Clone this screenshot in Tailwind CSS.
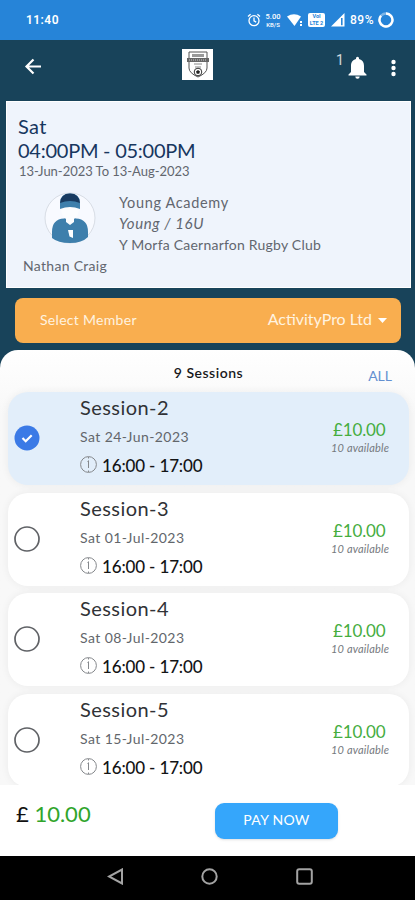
<!DOCTYPE html>
<html lang="en">
<head>
<meta charset="utf-8">
<meta name="viewport" content="width=device-width, initial-scale=1">
<title>Sessions</title>
<script src="https://cdn.jsdelivr.net/npm/@tailwindcss/browser@4"></script>
</head>
<body class="w-[415px] h-[900px] overflow-hidden flex flex-col bg-[#18435a] font-[Lato,'Liberation_Sans',sans-serif]">
<div class="h-10 shrink-0 bg-[#2684d8] text-white flex items-center justify-between pl-[26px] pr-[21px] font-[Roboto,sans-serif] text-[12px] font-semibold">
  <span class="tracking-[0.45px]">11:40</span>
  <div class="flex items-center">
    <svg class="w-[14px] h-[14px]" viewBox="0 0 14 14" fill="none" stroke="#fff" stroke-width="1.3"><circle cx="7" cy="7.7" r="5"/><path d="M7 4.5v3.4l2.2 1.2M1 3.4l2.6-2.2M13 3.4l-2.6-2.2"/></svg>
    <div class="ml-[4px] w-[16px] flex flex-col items-center text-[7.500px] leading-[8px] font-medium"><span>5.00</span><span class="text-[6px] leading-[7px]">KB/S</span></div>
    <svg class="ml-[6px] w-[16px] h-[14px]" viewBox="0 0 16 14" fill="#fff"><path d="M0 3.5Q7-1 14 3.5L7.500 13z"/><path d="M13 8h2v2h-2zM13 11h2v2h-2z"/></svg>
    <div class="ml-[5px] w-[17px] h-[14px] rounded-[2px] bg-white text-[#2684d8] text-[5.500px] leading-[7px] font-bold flex flex-col items-center justify-center"><span>VoI</span><span>LTE 2</span></div>
    <svg class="ml-[6px] w-[14px] h-[14px]" viewBox="0 0 14 14"><path fill="#fff" d="M0 13.5L13.5 0v13.5z"/><path fill="#2684d8" d="M10 5h1.6v7.3H10z"/></svg>
    <span class="ml-[5px] tracking-[0.5px] font-medium">89%</span>
    <svg class="ml-[4px] w-[16px] h-[16px]" viewBox="0 0 16 16" fill="none" stroke="#fff" stroke-width="2.400"><circle cx="8" cy="8" r="6.5" stroke-opacity=".4"/><path d="M8 1.5A6.5 6.5 0 1 1 3 3.8"/></svg>
  </div>
</div>
<header class="h-[61px] shrink-0 flex items-start pl-[24px] pr-[15px] pt-[9px] text-white">
  <svg class="mt-[9px] w-[18px] h-[18px]" viewBox="0 0 18 18" fill="none" stroke="#fff" stroke-width="2.200"><path d="M17 8.500H2M9.500 1.500l-7 7 7 7"/></svg>
  <svg class="ml-[140px] w-[31px] h-[31px]" viewBox="0 0 31 31"><path fill="#fff" d="M0 0h31v31H0z"/><path d="M7 3h18v16q0 5-9 9-9-4-9-9z" fill="#fff" stroke="#555" stroke-width="1"/><path d="M10 5h12v3H10z" fill="#999"/><path d="M5 9h22v4H5z" fill="#666"/><path d="M7 11h18" stroke="#ccc" stroke-dasharray="1 1"/><path d="M12 15h8M13 18h6" stroke="#888"/><circle cx="16" cy="23" r="3.800" fill="#fff" stroke="#333"/><path d="M16 21l2 1.500-.8 2.300h-2.400L14 22.500z" fill="#222"/></svg>
  <span class="ml-[123px] mt-[3px] text-[14px] leading-[16px] w-[8px] text-white/80 font-[Roboto,sans-serif]">1</span>
  <svg class="ml-[4px] mt-[7px] w-[19px] h-[23px]" viewBox="0 0 19 23" fill="#fff"><path d="M8 2.300a1.500 1.500 0 0 1 3 0v.8c3.500.8 5 3.600 5 7V16l2.500 2.500v1H.5v-1L3 16v-5.900c0-3.400 1.500-6.200 5-7zM7.300 20.500h4.400a2.200 2.200 0 0 1-4.400 0z"/></svg>
  <svg class="ml-[23px] mt-[10px] w-[6px] h-[18px]" viewBox="0 0 6 18" fill="#fff"><circle cx="3.500" cy="3" r="2.200"/><circle cx="3.500" cy="9" r="2.200"/><circle cx="3.500" cy="15" r="2.200"/></svg>
</header>
<section class="h-[187px] shrink-0 ml-[6px] mr-[4px] bg-[#eff4fc] border border-white pl-[11px] text-[#62666f]">
  <div class="pt-[12px] text-[#17375f] text-[20px] leading-[24px]"><div class="tracking-[0.4px]">Sat</div><div class="tracking-[-0.25px]">04:00PM - 05:00PM</div></div>
  <div class="pl-[1px] mt-px text-[13px] leading-[17px] tracking-[-0.03px]">13-Jun-2023 To 13-Aug-2023</div>
  <div class="flex">
    <div class="w-[101px] pl-[5px]">
      <svg class="ml-[21px] mt-[12px] w-[52px] h-[52px]" viewBox="0 0 52 52"><circle cx="26" cy="26" r="25" fill="#f8faff" stroke="#d8dde5"/><path d="M8 46V40Q8 27 20 26.500L22 26l4 5 4-5 2 .5Q44 27 44 40v5q-6 6-18 6T8 46z" fill="#3e7fac"/><path d="M17 15h18q0 9-5 12v3l-4 3-4-3v-3q-5-3-5-12z" fill="#fcfdff"/><path d="M16 17V11Q16 1.500 26 1.500t10 9.500v6q-10-4-20 0z" fill="#3e7fac"/><path d="M16 11Q17 1.500 26 1.500t10 9.500q-10-4-20 0z" fill="#183a60"/><path d="M24 38h5v8l-3.500-1.500z" fill="#fff"/></svg>
      <div class="mt-[13px] text-[14px] leading-[18px] tracking-[0.3px] whitespace-nowrap">Nathan Craig</div>
    </div>
    <div class="pt-[12px] text-[14px] leading-[21px] whitespace-nowrap">
      <div class="text-[14.500px] tracking-[0.65px]">Young Academy</div>
      <div class="italic text-[15px] tracking-[0.6px]">Young / 16U</div>
      <div class="tracking-[0.22px]">Y Morfa Caernarfon Rugby Club</div>
    </div>
  </div>
</section>
<div class="mt-[10px] ml-[15px] mr-[14px] h-[45px] shrink-0 rounded-[8px] bg-[#f9ae4f] text-[#fff3e0] flex items-center justify-between pl-[25px] pr-[14px] pb-[3px]">
  <span class="text-[14px] tracking-[0.3px]">Select Member</span>
  <div class="flex items-center"><span class="text-[16px]">ActivityPro Ltd</span><svg class="ml-[6px] mt-[2px] w-[9px] h-[5px]" viewBox="0 0 9 5" fill="#fff"><path d="M0 0h9L4.500 5z"/></svg></div>
</div>
<main class="mt-[7px] h-[435px] shrink-0 overflow-hidden rounded-t-[18px] bg-linear-to-b from-white from-0% to-[#f8f8f8] to-15%">
  <div class="h-[42px] grid grid-cols-3 pr-[23px] pl-[25px]">
    <span></span>
    <span class="pt-[14px] text-center text-[14px] leading-[18px] tracking-[0.5px] font-semibold text-[#18191b]">9 Sessions</span>
    <span class="pt-[17px] text-right text-[14px] leading-[18px] text-[#6390d0]">ALL</span>
  </div>
  <div id="list" class="flex flex-col gap-[7.500px] pl-[8px] pr-[6px]"></div>
</main>
<footer class="h-[71px] shrink-0 bg-white flex items-start pl-[16px]">
  <div class="w-[199px] pt-[16px] text-[22px] leading-[26px] text-[#31a52b]"><span class="text-[#111]">£</span> <span>10.00</span></div>
  <div class="mt-[18px] w-[123px] h-[36px] rounded-[9px] bg-[#35a6fb] shadow-sm text-white text-[14px] tracking-[0.3px] leading-[34px] text-center">PAY NOW</div>
</footer>
<nav class="h-[44px] shrink-0 bg-black flex pl-[107px] pt-[12px] gap-[78px]">
  <svg class="w-[17px] h-[17px]" viewBox="0 0 17 17" fill="none" stroke="#a3a3a3" stroke-width="2"><path d="M15 1.500v14L2 8.500z"/></svg>
  <svg class="-ml-px w-[17px] h-[17px]" viewBox="0 0 17 17" fill="none" stroke="#a3a3a3" stroke-width="2"><circle cx="8.500" cy="8.500" r="7.200"/></svg>
  <svg class="w-[17px] h-[17px]" viewBox="0 0 17 17" fill="none" stroke="#a3a3a3" stroke-width="2"><rect x="1.200" y="1.200" width="14.600" height="14.600" rx="2"/></svg>
</nav>
<script>
const sessions = [['Session-2','Sat 24-Jun-2023',true],['Session-3','Sat 01-Jul-2023'],['Session-4','Sat 08-Jul-2023'],['Session-5','Sat 15-Jul-2023']];
const on = '<svg class="w-[26px] h-[26px]" viewBox="0 0 26 26"><circle cx="13" cy="13" r="12.500" fill="#3b7ae6"/><path d="M8.500 13l3.200 3.200 6-6" fill="none" stroke="#fff" stroke-width="2.200"/></svg>';
const off = '<svg class="w-[26px] h-[26px]" viewBox="0 0 26 26"><circle cx="13" cy="13" r="12" fill="none" stroke="#606266" stroke-width="1.700"/></svg>';
document.getElementById('list').innerHTML = sessions.map(([name, date, selected]) => `
<div class="h-[93px] shrink-0 flex rounded-[20px] shadow-[0_0_8px_rgba(0,0,0,0.06)] ${selected ? 'bg-[#e2eefa]' : 'bg-white'}">
  <div class="w-[72px] pl-[6px] pt-[33px]">${selected ? on : off}</div>
  <div class="grow pt-[3px]">
    <div class="text-[20px] leading-[25px] tracking-[0.45px] text-[#303236]">${name}</div>
    <div class="mt-[7px] text-[14px] leading-[19px] tracking-[0.42px] text-[#62666b]">${date}</div>
    <div class="mt-[9px] flex items-center text-[17px] leading-[21px] tracking-[-0.15px] font-medium text-[#131416]"><svg class="w-[17px] h-[17px] mr-[5px] -mt-[2px]" viewBox="0 0 17 17" fill="none" stroke="#85888c"><circle cx="8.500" cy="8.500" r="7.900"/><path d="M7.500 5.500l1-.8V12M8.500 1v1.500M8.500 14.500V16"/></svg><span>16:00 - 17:00</span></div>
  </div>
  <div class="w-[79px] pt-[27px] whitespace-nowrap"><div class="pl-[3px] text-[17px] leading-[22px] tracking-[-0.15px] text-[#45ad3f]">£10.00</div><div class="pl-px text-[11px] leading-[14px] tracking-[0.2px] italic text-[#75797e]">10 available</div></div>
</div>`).join('');
</script>
</body>
</html>
